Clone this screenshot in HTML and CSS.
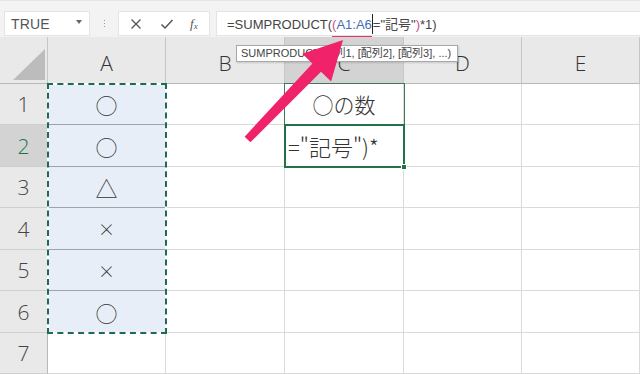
FILE: index.html
```html
<!DOCTYPE html>
<html lang="ja">
<head>
<meta charset="utf-8">
<link rel="stylesheet" href="styles.css">
</head>
<body>
<div class="page">
  <div class="toolbar">
    <div class="namebox"><span class="nb-text">TRUE</span><span class="nb-dd"></span></div>
    <div class="sep"><i></i><i></i><i></i></div>
    <div class="btns">
      <svg class="ico" width="12" height="12" viewBox="0 0 12 12"><path d="M1.5 1.5 L10.5 10.5 M10.5 1.5 L1.5 10.5" stroke="#555" stroke-width="1.3" fill="none"/></svg>
      <svg class="ico" width="14" height="12" viewBox="0 0 14 12"><path d="M1.5 6.5 L5 10 L12.5 2" stroke="#555" stroke-width="1.5" fill="none"/></svg>
      <span class="fx">f<sub>x</sub></span>
    </div>
    <div class="formula"><span class="ftext">=SUMPRODUCT(<span class="ul"><span class="pp">(</span><span class="rf">A1:A6</span></span><span class="caret"></span>="記号"<span class="pp">)</span>*1)</span></div>
  </div>
  <div class="grid">
    <div class="corner"><span class="tri"></span></div>
    <div class="ch">A</div>
    <div class="ch">B</div>
    <div class="ch sel">C</div>
    <div class="ch">D</div>
    <div class="ch">E</div>

    <div class="rh">1</div>
    <div class="c a sym">○</div>
    <div class="c"></div>
    <div class="c jp">○の数</div>
    <div class="c"></div>
    <div class="c"></div>

    <div class="rh sel">2</div>
    <div class="c a sym">○</div>
    <div class="c"></div>
    <div class="c jp edit">="記号")*</div>
    <div class="c"></div>
    <div class="c"></div>

    <div class="rh">3</div>
    <div class="c a sym">△</div>
    <div class="c"></div>
    <div class="c"></div>
    <div class="c"></div>
    <div class="c"></div>

    <div class="rh">4</div>
    <div class="c a sym small">×</div>
    <div class="c"></div>
    <div class="c"></div>
    <div class="c"></div>
    <div class="c"></div>

    <div class="rh">5</div>
    <div class="c a sym small">×</div>
    <div class="c"></div>
    <div class="c"></div>
    <div class="c"></div>
    <div class="c"></div>

    <div class="rh">6</div>
    <div class="c a sym">○</div>
    <div class="c"></div>
    <div class="c"></div>
    <div class="c"></div>
    <div class="c"></div>

    <div class="rh">7</div>
    <div class="c"></div>
    <div class="c"></div>
    <div class="c"></div>
    <div class="c"></div>
    <div class="c"></div>

    <div class="ants-bg"></div>
    <div class="ants"></div>
    <div class="c1box"></div>
    <div class="active"><span class="handle"></span></div>
  </div>
  <div class="tip">SUMPRODUCT(配列1, [配列2], [配列3], ...)</div>
  <svg class="arrow" width="640" height="374" viewBox="0 0 640 374">
    <polygon points="244.6,136.7 312.4,63.4 302.3,53.8 343,40 331.1,81.4 321,71.8 250.4,142.3" fill="#f0226a"/>
  </svg>
</div>
</body>
</html>
```
FILE: styles.css
```css
* { box-sizing: border-box; }
html, body { margin: 0; padding: 0; }
body { width: 640px; height: 374px; overflow: hidden; background: #fff; font-family: "Liberation Sans", Arial, sans-serif; }
.page { position: relative; width: 640px; height: 374px; overflow: hidden; }

.toolbar { height: 37px; background: #f3f3f3; border-top: 1px solid #e6e6e6; display: flex; align-items: flex-start; padding-top: 10px; }
.namebox { margin-left: 4px; width: 86px; height: 25px; background: #fff; border: 1px solid #e4e4e4; display: flex; align-items: center; justify-content: space-between; padding: 0 5px 0 6px; }
.nb-text { font-size: 14px; color: #555; letter-spacing: 0.2px; }
.nb-dd { width: 0; height: 0; border-left: 3px solid transparent; border-right: 3px solid transparent; border-top: 4px solid #666; margin-right: 2px; margin-top: -3px; }
.sep { width: 28px; height: 25px; display: flex; flex-direction: column; align-items: center; justify-content: center; gap: 2px; }
.sep i { display: block; width: 1px; height: 1px; background: #999; }
.btns { width: 92px; height: 25px; background: #fff; border: 1px solid #e4e4e4; display: flex; align-items: center; padding-left: 11px; }
.btns .ico:nth-child(1) { margin-right: 18px; }
.btns .ico:nth-child(2) { margin-right: 16px; }
.fx { font-family: "Liberation Serif", serif; font-style: italic; font-size: 13px; color: #555; line-height: 1; }
.fx sub { font-size: 9px; vertical-align: -1px; }
.formula { margin-left: 6px; flex: 1; height: 25px; background: #fff; border: 1px solid #e4e4e4; border-right: 0; padding-left: 10px; display: flex; align-items: center; }
.ftext { font-size: 13px; color: #444; white-space: nowrap; font-family: "Liberation Sans", "Noto Sans CJK JP", sans-serif; }
.ul { border-bottom: 2px solid #e5336d; padding-bottom: 4px; }
.pp { color: #c8508a; }
.rf { color: #3f6fb5; }
.caret { display: inline-block; width: 1px; height: 20px; background: #222; vertical-align: -5px; }

.grid { position: relative; display: grid; grid-template-columns: 48px 118px 119px 119px 118px 118px; grid-template-rows: 47px 41px 42px 41px 42px 41px 42px 41px; }
.corner { background: #e9e9e9; border-right: 1px solid #c6c6c6; border-bottom: 1px solid #b8b8b8; position: relative; }
.tri { position: absolute; right: 2px; bottom: 3px; width: 0; height: 0; border-left: 32px solid transparent; border-bottom: 31px solid #bcbcbc; }
.ch { background: #e9e9e9; border-right: 1px solid #c6c6c6; border-bottom: 1px solid #b8b8b8; display: flex; align-items: center; justify-content: center; padding-top: 6px; font-size: 21px; font-weight: 300; color: #333; font-family: "Open Sans", "Liberation Sans", sans-serif; }
.ch.sel { background: #d3d3d3; }
.rh { background: #e9e9e9; border-right: 1px solid #b8b8b8; border-bottom: 1px solid #cfcfcf; display: flex; align-items: center; justify-content: center; font-size: 21px; font-weight: 300; color: #444; font-family: "Open Sans", "Liberation Sans", sans-serif; }
.rh.sel { background: #d3d3d3; color: #217346; }
.c { border-right: 1px solid #dadada; border-bottom: 1px solid #dadada; display: flex; align-items: center; justify-content: center; overflow: hidden; white-space: nowrap; }
.c.a { background: #e8eef8; border-bottom-color: #9ea3aa; border-right-color: #9ea3aa; }
.sym { font-family: "Noto Sans CJK JP", sans-serif; font-size: 22px; font-weight: 300; color: #333; line-height: 1; }
.sym.small { font-size: 17px; }
.jp { font-family: "Noto Sans CJK JP", sans-serif; font-size: 21px; font-weight: 300; color: #333; }
.edit { justify-content: flex-start; padding-left: 3px; font-size: 22px; }

.ants-bg { position: absolute; left: 47px; top: 46px; width: 120px; height: 251px; border: 2px solid #fff; }
.ants { position: absolute; left: 47px; top: 46px; width: 120px; height: 251px; border: 2px dashed #1e6a55; }
.c1box { position: absolute; left: 284px; top: 46px; width: 121px; height: 43px; border: 1px solid #3d7a58; }
.active { position: absolute; left: 284px; top: 87px; width: 121px; height: 44px; border: 2px solid #217346; }
.handle { position: absolute; right: -4px; bottom: -4px; width: 6px; height: 6px; background: #217346; border: 1px solid #fff; }

.tip { position: absolute; left: 236px; top: 45px; width: 222px; height: 17px; background: #fff; border: 1px solid #a8a8a8; box-shadow: 1px 1px 2px rgba(0,0,0,0.15); font-size: 11px; color: #444; line-height: 15px; padding-left: 4px; white-space: nowrap; font-family: "Liberation Sans", "Noto Sans CJK JP", sans-serif; }
.arrow { position: absolute; left: 0; top: 0; pointer-events: none; }
```
